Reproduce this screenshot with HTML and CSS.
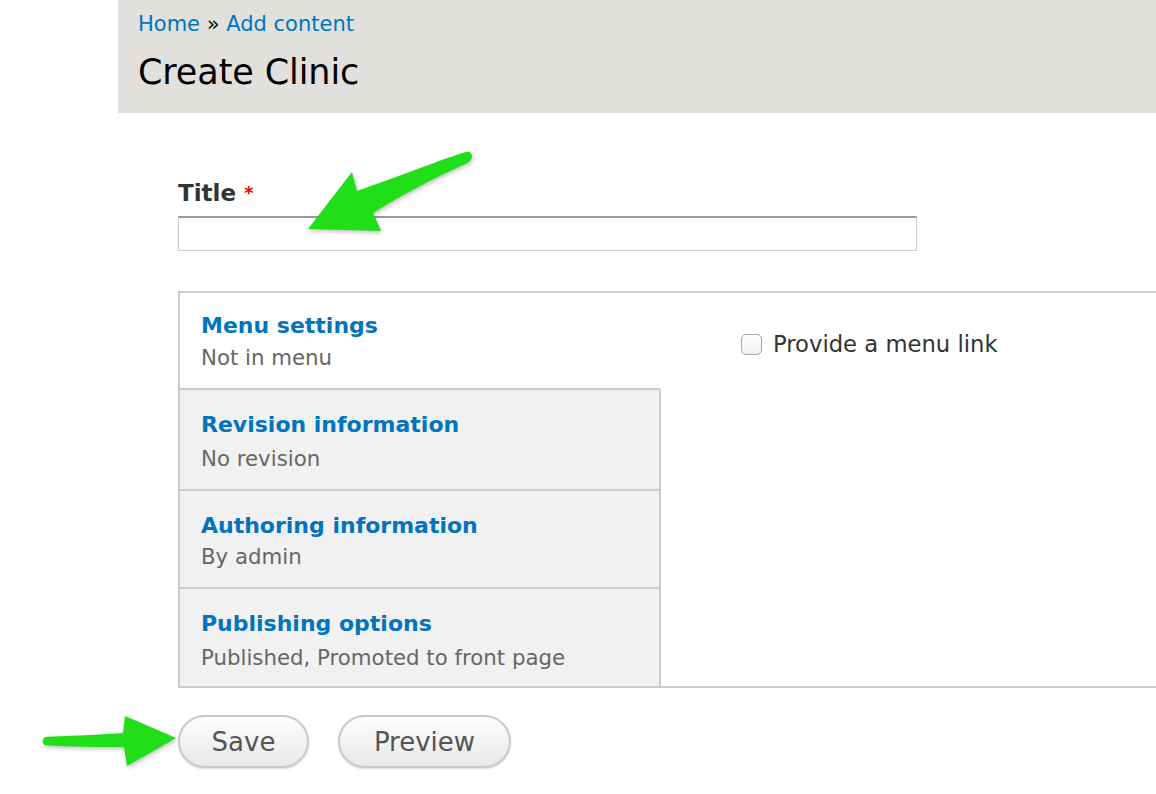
FILE: index.html
```html
<!DOCTYPE html>
<html>
<head>
<meta charset="utf-8">
<link rel="stylesheet" href="styles.css">
</head>
<body>
<header class="page-header">
  <nav class="breadcrumb"><a href="#">Home</a> » <a href="#">Add content</a></nav>
  <h1 class="page-title">Create Clinic</h1>
</header>
<main class="content">
  <form class="node-form">
    <div class="form-item">
      <label class="form-label" for="title">Title <span class="required">*</span></label>
      <input class="form-text" id="title" type="text">
    </div>
    <div class="vertical-tabs">
      <ul class="tab-list">
        <li class="tab is-selected"><a href="#" class="tab-title">Menu settings</a><span class="tab-summary">Not in menu</span></li>
        <li class="tab tab-2"><a href="#" class="tab-title">Revision information</a><span class="tab-summary">No revision</span></li>
        <li class="tab tab-3"><a href="#" class="tab-title">Authoring information</a><span class="tab-summary">By admin</span></li>
        <li class="tab"><a href="#" class="tab-title">Publishing options</a><span class="tab-summary">Published, Promoted to front page</span></li>
      </ul>
      <div class="tab-pane">
        <label class="checkbox-item"><span class="checkbox"></span>Provide a menu link</label>
      </div>
    </div>
    <div class="form-actions">
      <button type="button" class="button">Save</button>
      <button type="button" class="button button-preview">Preview</button>
    </div>
  </form>
</main>
<svg class="annotations" width="1156" height="794" viewBox="0 0 1156 794">
  <path class="arrow" d="M308 229 L352 172 L357 191 C400 176 440 160 466 152 Q472 151 472 157 Q471 162 465 164 C430 180 400 196 373 213 L381 231 Z"/>
  <path class="arrow" d="M176 738 L125 716 L123 733 C95 735 65 736 45 737 Q41 740 44 745 C70 747 100 747 124 747 L127 766 Z"/>
</svg>
</body>
</html>
```
FILE: styles.css
```css
html, body {
  margin: 0;
  padding: 0;
  background: #fff;
}
body {
  font-family: "DejaVu Sans", Verdana, sans-serif;
  color: #333;
  position: relative;
  width: 1156px;
  height: 794px;
  overflow: hidden;
}
a {
  color: #0074bd;
  text-decoration: none;
}
.page-header {
  margin-left: 118px;
  height: 113px;
  box-sizing: border-box;
  background: #e1e0dc;
  padding: 10px 20px 0;
}
.breadcrumb {
  font-size: 21px;
  line-height: 28px;
  color: #111;
}
.page-title {
  margin: 13px 0 0;
  font-size: 35px;
  line-height: 42px;
  font-weight: normal;
  color: #000;
  letter-spacing: -0.1px;
}
.content {
  padding: 65px 0 0 178px;
}
.form-item {
  display: flex;
  flex-direction: column;
}
.form-label {
  font-size: 23px;
  font-weight: bold;
  line-height: 30px;
  color: #333;
  margin-bottom: 8px;
}
.required {
  color: #e00;
  font-size: 18px;
  vertical-align: top;
}
.form-text {
  width: 739px;
  height: 35px;
  box-sizing: border-box;
  margin: 0;
  border: 1px solid #ccc;
  border-top: 2px solid #999;
  background: #fff;
}
.vertical-tabs {
  margin-top: 40px;
  display: flex;
  border-top: 2px solid #ccc;
  border-bottom: 2px solid #ccc;
  border-left: 2px solid #ccc;
  height: 397px;
  box-sizing: border-box;
}
.tab-list {
  list-style: none;
  margin: 0;
  padding: 0;
  width: 481px;
  flex: none;
  display: flex;
  flex-direction: column;
}
.tab {
  display: flex;
  flex-direction: column;
  height: 98px;
  box-sizing: border-box;
  padding: 20px 0 0 21px;
  background: #f1f1f1;
  border-right: 2px solid #ccc;
  border-bottom: 2px solid #ccc;
}
.tab.is-selected {
  background: #fff;
  border-right-color: transparent;
  height: 97px;
  padding-top: 18px;
}
.tab-2 {
  height: 101px;
}
.tab-3 {
  height: 98px;
}
.tab:last-child {
  border-bottom: none;
  flex: 1;
}
.tab-title {
  font-size: 22px;
  font-weight: bold;
  line-height: 30px;
}
.tab-summary {
  font-size: 21.3px;
  line-height: 30px;
  margin-top: 4px;
  color: #666;
}
.tab.is-selected .tab-summary {
  margin-top: 2px;
}
.tab-3 .tab-summary {
  margin-top: 1px;
}
.tab-pane {
  flex: 1;
  padding: 36px 0 0 80px;
}
.checkbox-item {
  display: flex;
  align-items: center;
  font-size: 22.7px;
  line-height: 30px;
  color: #333;
}
.checkbox {
  width: 21px;
  height: 21px;
  box-sizing: border-box;
  border: 1px solid #aaa;
  border-radius: 5px;
  background: linear-gradient(#fff, #f0f0f0);
  margin-right: 11px;
}
.form-actions {
  display: flex;
  gap: 29px;
  margin-top: 27px;
}
.button {
  height: 53px;
  width: 131px;
  box-sizing: border-box;
  border: 2px solid #c8c8c8;
  border-radius: 27px;
  background: linear-gradient(#fdfdfd, #e8e8e8);
  box-shadow: 0 1px 2px rgba(0,0,0,0.15);
  font-family: "DejaVu Sans", Verdana, sans-serif;
  font-size: 26px;
  color: #555;
  padding: 0;
}
.button-preview {
  width: 173px;
}
.annotations {
  position: absolute;
  left: 0;
  top: 0;
  pointer-events: none;
}
.arrow {
  fill: #20df18;
  filter: drop-shadow(1px 2px 2px rgba(0,0,0,0.25));
}
```
